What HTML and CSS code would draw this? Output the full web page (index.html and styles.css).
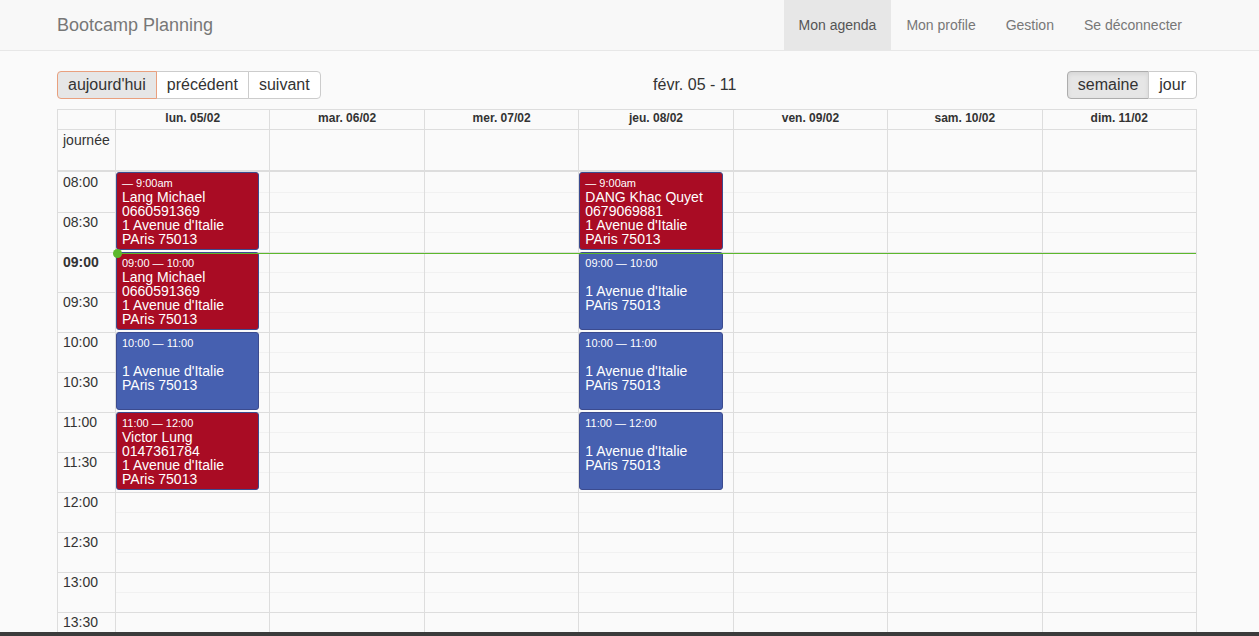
FILE: index.html
```html
<!DOCTYPE html>
<html lang="fr">
<head>
<meta charset="utf-8">
<title>Bootcamp Planning</title>
<link rel="stylesheet" href="styles.css">
</head>
<body>
<nav class="navbar">
  <div class="container nav-inner">
    <a class="brand" href="#">Bootcamp Planning</a>
    <ul class="nav">
      <li class="active"><a href="#">Mon agenda</a></li>
      <li><a href="#">Mon profile</a></li>
      <li><a href="#">Gestion</a></li>
      <li><a href="#">Se déconnecter</a></li>
    </ul>
  </div>
</nav>

<main class="container">
  <div class="toolbar">
    <div class="btn-group">
      <button class="btn btn-today">aujourd'hui</button>
      <button class="btn">précédent</button>
      <button class="btn">suivant</button>
    </div>
    <h2 class="title">févr. 05 - 11</h2>
    <div class="btn-group">
      <button class="btn btn-active">semaine</button>
      <button class="btn">jour</button>
    </div>
  </div>

  <div class="cal">
    <div class="row head">
      <div class="axis"></div>
      <div class="day">lun. 05/02</div>
      <div class="day">mar. 06/02</div>
      <div class="day">mer. 07/02</div>
      <div class="day">jeu. 08/02</div>
      <div class="day">ven. 09/02</div>
      <div class="day">sam. 10/02</div>
      <div class="day">dim. 11/02</div>
    </div>
    <div class="row allday">
      <div class="axis">journée</div>
      <div class="day"></div><div class="day"></div><div class="day"></div><div class="day"></div><div class="day"></div><div class="day"></div><div class="day"></div>
    </div>
    <div class="divider"></div>

    <div class="tg">
      <div class="slots">
        <div class="slot major first"><div class="label">08:00</div><div class="lane"></div></div>
        <div class="slot minor"><div class="label"></div><div class="lane"></div></div>
        <div class="slot major"><div class="label">08:30</div><div class="lane"></div></div>
        <div class="slot minor"><div class="label"></div><div class="lane"></div></div>
        <div class="slot major"><div class="label now">09:00</div><div class="lane"></div></div>
        <div class="slot minor"><div class="label"></div><div class="lane"></div></div>
        <div class="slot major"><div class="label">09:30</div><div class="lane"></div></div>
        <div class="slot minor"><div class="label"></div><div class="lane"></div></div>
        <div class="slot major"><div class="label">10:00</div><div class="lane"></div></div>
        <div class="slot minor"><div class="label"></div><div class="lane"></div></div>
        <div class="slot major"><div class="label">10:30</div><div class="lane"></div></div>
        <div class="slot minor"><div class="label"></div><div class="lane"></div></div>
        <div class="slot major"><div class="label">11:00</div><div class="lane"></div></div>
        <div class="slot minor"><div class="label"></div><div class="lane"></div></div>
        <div class="slot major"><div class="label">11:30</div><div class="lane"></div></div>
        <div class="slot minor"><div class="label"></div><div class="lane"></div></div>
        <div class="slot major"><div class="label">12:00</div><div class="lane"></div></div>
        <div class="slot minor"><div class="label"></div><div class="lane"></div></div>
        <div class="slot major"><div class="label">12:30</div><div class="lane"></div></div>
        <div class="slot minor"><div class="label"></div><div class="lane"></div></div>
        <div class="slot major"><div class="label">13:00</div><div class="lane"></div></div>
        <div class="slot minor"><div class="label"></div><div class="lane"></div></div>
        <div class="slot major"><div class="label">13:30</div><div class="lane"></div></div>
        <div class="slot minor"><div class="label"></div><div class="lane"></div></div>
      </div>

      <div class="cols">
        <div class="col">
          <div class="ev red" style="grid-row: 1 / span 4">
            <div class="ev-time">— 9:00am</div>
            <div class="ev-title">Lang Michael<br>0660591369<br>1 Avenue d'Italie<br>PAris 75013</div>
          </div>
          <div class="ev red" style="grid-row: 5 / span 4">
            <div class="ev-time">09:00 — 10:00</div>
            <div class="ev-title">Lang Michael<br>0660591369<br>1 Avenue d'Italie<br>PAris 75013</div>
          </div>
          <div class="ev blue" style="grid-row: 9 / span 4">
            <div class="ev-time">10:00 — 11:00</div>
            <div class="ev-title">&nbsp;<br>1 Avenue d'Italie<br>PAris 75013</div>
          </div>
          <div class="ev red" style="grid-row: 13 / span 4">
            <div class="ev-time">11:00 — 12:00</div>
            <div class="ev-title">Victor Lung<br>0147361784<br>1 Avenue d'Italie<br>PAris 75013</div>
          </div>
        </div>
        <div class="col"></div>
        <div class="col"></div>
        <div class="col">
          <div class="ev red" style="grid-row: 1 / span 4">
            <div class="ev-time">— 9:00am</div>
            <div class="ev-title">DANG Khac Quyet<br>0679069881<br>1 Avenue d'Italie<br>PAris 75013</div>
          </div>
          <div class="ev blue" style="grid-row: 5 / span 4">
            <div class="ev-time">09:00 — 10:00</div>
            <div class="ev-title">&nbsp;<br>1 Avenue d'Italie<br>PAris 75013</div>
          </div>
          <div class="ev blue" style="grid-row: 9 / span 4">
            <div class="ev-time">10:00 — 11:00</div>
            <div class="ev-title">&nbsp;<br>1 Avenue d'Italie<br>PAris 75013</div>
          </div>
          <div class="ev blue" style="grid-row: 13 / span 4">
            <div class="ev-time">11:00 — 12:00</div>
            <div class="ev-title">&nbsp;<br>1 Avenue d'Italie<br>PAris 75013</div>
          </div>
        </div>
        <div class="col"></div>
        <div class="col"></div>
        <div class="col"></div>
      </div>

      <div class="now-line"><span class="now-dot"></span></div>
    </div>
  </div>
</main>
<div class="bottom-bar"></div>
</body>
</html>
```

FILE: styles.css
```css
* { box-sizing: border-box; }

html, body {
  margin: 0;
  padding: 0;
}

body {
  background: #fafafa;
  font-family: "Liberation Sans", Arial, Helvetica, sans-serif;
  font-size: 14px;
  color: #333;
  overflow: hidden;
  height: 636px;
}

.container {
  width: 1140px;
  margin-left: 57px;
}

/* Navbar */
.navbar {
  height: 51px;
  background: #f8f8f8;
  border-bottom: 1px solid #e7e7e7;
}

.nav-inner {
  display: flex;
  justify-content: space-between;
  align-items: stretch;
  height: 50px;
}

.brand {
  font-size: 18px;
  line-height: 20px;
  padding: 15px 0;
  color: #777;
  text-decoration: none;
}

.nav {
  list-style: none;
  margin: 0;
  padding: 0;
  display: flex;
}

.nav li a {
  display: block;
  padding: 15px;
  line-height: 20px;
  color: #777;
  text-decoration: none;
  font-size: 14px;
}

.nav li.active a {
  background: #e7e7e7;
  color: #555;
}

/* Toolbar */
.toolbar {
  display: flex;
  align-items: center;
  margin-top: 20px;
  margin-bottom: 10px;
  height: 28px;
}

.title {
  flex: 1;
  text-align: center;
  margin: 0;
  font-size: 16px;
  font-weight: normal;
  color: #333;
  padding-left: 2px;
}

.btn-group {
  display: flex;
}

.btn {
  height: 28px;
  padding: 0 10px;
  font-family: inherit;
  font-size: 16px;
  color: #333;
  background: #fff;
  border: 1px solid #ccc;
  border-radius: 0;
  margin-left: -1px;
  line-height: 26px;
}

.btn:first-child {
  margin-left: 0;
  border-radius: 4px 0 0 4px;
}

.btn:last-child {
  border-radius: 0 4px 4px 0;
}

.btn-today {
  background: #e6e6e6;
  border-color: #e9a07e;
  position: relative;
  z-index: 1;
}

.btn-active {
  background: #e6e6e6;
  border-color: #adadad;
  box-shadow: inset 0 2px 4px rgba(0, 0, 0, 0.08);
}

/* Calendar */
.cal {
  border: 1px solid #ddd;
  border-bottom: none;
}

.row {
  display: grid;
  grid-template-columns: 57px repeat(7, 1fr);
}

.row .day {
  border-left: 1px solid #ddd;
}

.head {
  height: 20px;
  border-bottom: 1px solid #ddd;
}

.head .day {
  font-size: 12px;
  font-weight: bold;
  text-align: center;
  line-height: 17px;
}

.allday {
  height: 40px;
}

.allday .axis {
  padding: 0 0 0 5px;
  line-height: 20px;
  font-size: 14px;
}

.divider {
  height: 2px;
  background: #ddd;
}

.tg {
  position: relative;
}

.slot {
  display: flex;
  height: 20px;
}

.slot .label {
  width: 57px;
  padding-left: 5px;
  line-height: 19px;
  font-size: 14px;
}

.slot .label.now {
  font-weight: bold;
}

.slot .lane {
  flex: 1;
}

.slot.major {
  border-top: 1px solid #ddd;
}

.slot.major.first {
  border-top: none;
}

.slot.major.first .label {
  line-height: 20px;
}

.slot.minor .lane {
  border-top: 1px solid #f1f1f1;
}

.cols {
  position: absolute;
  top: 0;
  left: 57px;
  right: 0;
  bottom: 0;
  display: grid;
  grid-template-columns: repeat(7, 1fr);
}

.col {
  border-left: 1px solid #ddd;
  display: grid;
  grid-template-rows: repeat(24, 20px);
  align-content: start;
  padding: 0 10px 0 0;
}

.ev {
  margin: 0 0 2px 0;
  border: 1px solid #3b4b8f;
  border-radius: 3px;
  color: #fff;
  padding: 2px 4px 0 5px;
  overflow: hidden;
  position: relative;
  z-index: 2;
}

.ev.red {
  background: #a90c24;
}

.ev.blue {
  background: #4660b0;
}

.ev-time {
  font-size: 11px;
  line-height: 14px;
  padding-top: 1px;
}

.ev-title {
  font-size: 14px;
  line-height: 14px;
}

.now-line {
  position: absolute;
  top: 81px;
  left: 57px;
  right: 0;
  height: 1px;
  background: #5cb82c;
  z-index: 3;
}

.now-dot {
  position: absolute;
  left: -2px;
  top: -4px;
  width: 9px;
  height: 9px;
  border-radius: 50%;
  background: #5cb82c;
}

.bottom-bar {
  position: fixed;
  left: 0;
  right: 0;
  bottom: 0;
  height: 4px;
  background: #3b3b3b;
}
```
